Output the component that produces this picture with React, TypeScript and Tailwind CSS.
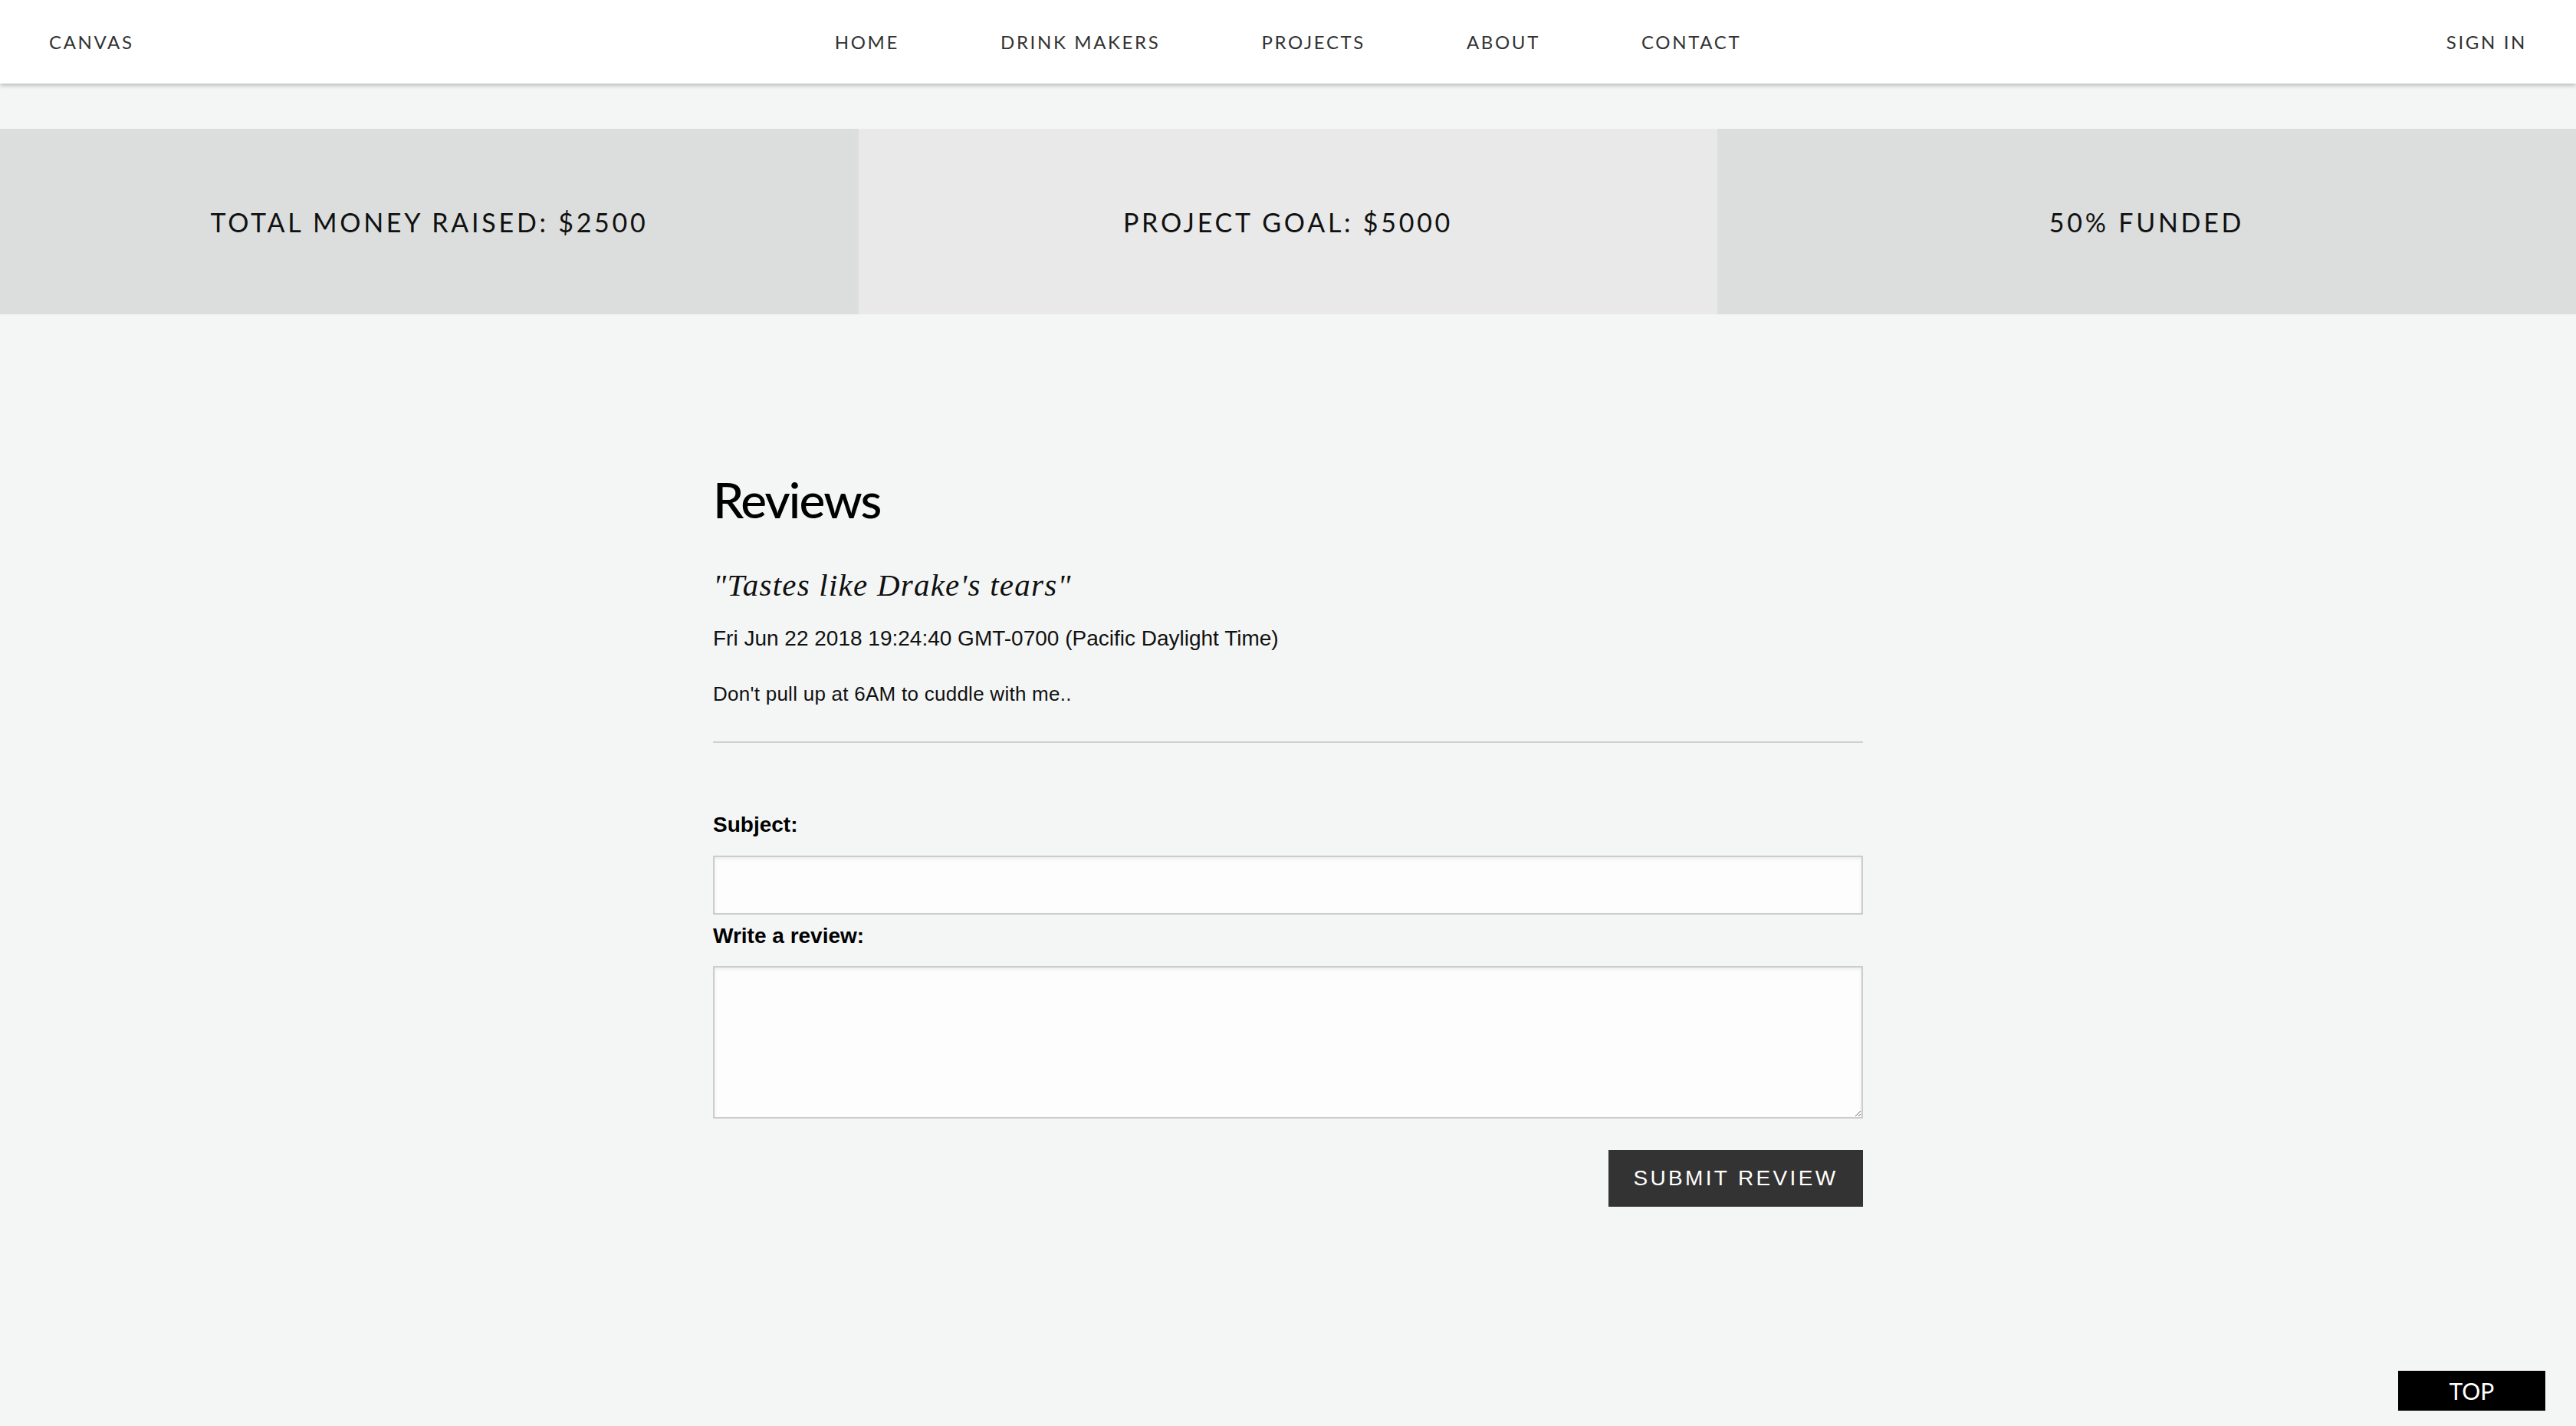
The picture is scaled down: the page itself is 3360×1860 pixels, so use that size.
import React from "react";

export default function App() {
  return (
    <div className="min-h-screen bg-[#f4f6f5] pb-[200px]">
      <header className="relative z-10 grid h-[109px] grid-cols-[1fr_auto_1fr] items-center bg-white px-[64px] shadow-[0_2px_6px_rgba(0,0,0,0.28)] font-['Lato',sans-serif] text-[24px] tracking-[0.11em] text-[#333]">
        <div>CANVAS</div>
        <nav className="flex gap-[132px]">
          <span>HOME</span>
          <span>DRINK MAKERS</span>
          <span>PROJECTS</span>
          <span>ABOUT</span>
          <span>CONTACT</span>
        </nav>
        <div className="text-right">SIGN IN</div>
      </header>

      <section className="mt-[59px] grid h-[242px] grid-cols-3 font-['Lato',sans-serif] text-[34px] tracking-[0.11em] text-[#111]">
        <div className="flex items-center justify-center bg-[#dcdedd]">TOTAL MONEY RAISED: $2500</div>
        <div className="flex items-center justify-center bg-[#e8e9e8]">PROJECT GOAL: $5000</div>
        <div className="flex items-center justify-center bg-[#dcdedd]">50% FUNDED</div>
      </section>

      <main className="mx-auto w-[1500px] pt-[210px]">
        <h2 className="font-['Lato',sans-serif] text-[64px] font-medium leading-[64px] tracking-[-0.03em] text-black">Reviews</h2>
        <h3 className="mt-[55px] font-['Liberation_Serif',serif] text-[41px] italic leading-[48px] tracking-[0.03em] text-[#111]">"Tastes like Drake's tears"</h3>
        <p className="mt-[30px] font-['Liberation_Sans',sans-serif] text-[28px] leading-[32px] text-[#111]">Fri Jun 22 2018 19:24:40 GMT-0700 (Pacific Daylight Time)</p>
        <p className="mt-[42px] font-['Liberation_Sans',sans-serif] text-[26px] leading-[28px] tracking-[0.01em] text-[#111]">Don't pull up at 6AM to cuddle with me..</p>
        <hr className="mt-[48px] border-0 border-t-2 border-[#cfcfcf]" />

        <form className="mt-[91px] flex flex-col font-['Liberation_Sans',sans-serif]">
          <label className="text-[28px] font-bold leading-[32px] text-black">Subject:</label>
          <input className="mt-[24px] h-[77px] w-full border-2 border-[#cccccc] bg-[#fdfdfd] px-3 shadow-[inset_0_2px_4px_rgba(0,0,0,0.08)] outline-none" />
          <label className="mt-[12px] text-[28px] font-bold leading-[32px] text-black">Write a review:</label>
          <textarea className="mt-[23px] h-[199px] w-full border-2 border-[#cccccc] bg-[#fdfdfd] px-3 shadow-[inset_0_2px_4px_rgba(0,0,0,0.08)] outline-none" />
          <div className="mt-[41px] flex justify-end">
            <button type="button" className="h-[74px] w-[332px] bg-[#333333] text-[28px] tracking-[0.12em] text-white">SUBMIT REVIEW</button>
          </div>
        </form>
      </main>

      <button type="button" className="fixed bottom-[20px] right-[40px] h-[52px] w-[192px] bg-black font-['Lato',sans-serif] text-[30px] text-white">TOP</button>
    </div>
  );
}
